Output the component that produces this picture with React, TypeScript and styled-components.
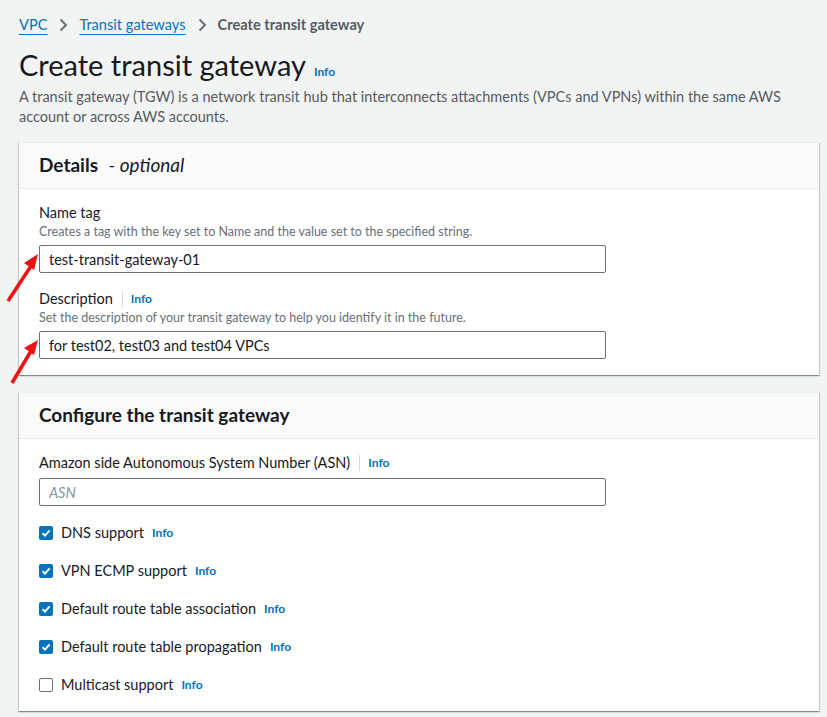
import React from "react"
import styled, { createGlobalStyle } from "styled-components"

const GlobalStyle = createGlobalStyle`
  body {
    margin: 0;
    background: #f2f3f3;
    font-family: Lato, "Open Sans", sans-serif;
    color: #16191f;
  }
`

const Page = styled.main`
  position: relative;
  padding: 15px 8px 30px 19px;
`

const Breadcrumbs = styled.nav`
  display: flex;
  align-items: center;
  gap: 8px;
  font-size: 14.6px;
  line-height: 20px;
`

const Crumb = styled.a`
  color: #0073bb;
  text-decoration: underline;
  text-underline-offset: 4px;
`

const CurrentCrumb = styled.span`
  color: #545b64;
  font-weight: 700;
`

const Chevron = styled.svg`
  width: 16px;
  height: 16px;
  color: #687078;
`

const TitleRow = styled.div`
  display: flex;
  align-items: baseline;
  gap: 8px;
  margin-top: 12px;
`

const Title = styled.h1`
  margin: 0;
  font-size: 29px;
  font-weight: 400;
  line-height: 36px;
`

const InfoLink = styled.a<{ $divider?: boolean }>`
  color: #0073bb;
  font-size: 12px;
  font-weight: 700;
  line-height: 16px;
  ${p => p.$divider && `
    margin-left: 1px;
    padding-left: 8px;
    border-left: 1px solid #d5dbdb;
  `}
`

const Lead = styled.p`
  margin: 4px 0 0;
  font-size: 14.5px;
  line-height: 20px;
  color: #545b64;
  max-width: 775px;
`

const Panel = styled.section<{ $gap?: number }>`
  width: 800px;
  margin-top: ${p => p.$gap ?? 15}px;
  background: #fff;
  border-top: 1px solid #eaeded;
  box-shadow: 0 1px 1px 0 rgba(0, 28, 36, 0.3), 1px 1px 1px 0 rgba(0, 28, 36, 0.15), -1px 1px 1px 0 rgba(0, 28, 36, 0.15);
`

const PanelHeader = styled.header`
  padding: 11px 20px 12px;
  background: #fafafa;
  border-bottom: 1px solid #eaeded;
`

const PanelTitle = styled.h2`
  margin: 0;
  font-size: 19px;
  font-weight: 700;
  line-height: 22px;
`

const Optional = styled.i`
  font-weight: 400;
  margin-left: 6px;
`

const PanelBody = styled.div`
  display: flex;
  flex-direction: column;
  gap: 16px;
  padding: 14px 20px 16px;
`

const Field = styled.div`
  display: flex;
  flex-direction: column;
`

const LabelRow = styled.div`
  display: flex;
  align-items: center;
  gap: 8px;
  font-size: 14.5px;
  line-height: 20px;
`

const Help = styled.div`
  font-size: 12.5px;
  line-height: 16px;
  color: #687078;
  margin-top: 1px;
`

const TextInput = styled.input`
  box-sizing: border-box;
  width: 567px;
  height: 28px;
  margin-top: 5px;
  padding: 0 9px;
  border: 1px solid #687078;
  border-radius: 2px;
  font-family: inherit;
  font-size: 14.5px;
  color: #16191f;
  background: #fff;
  &::placeholder {
    color: #879596;
    font-style: italic;
  }
`

const Checks = styled.div`
  display: flex;
  flex-direction: column;
  gap: 18px;
  margin-top: 1px;
`

const CheckRow = styled.label`
  display: flex;
  align-items: center;
  gap: 8px;
  font-size: 14.5px;
  line-height: 20px;
`

const Box = styled.span<{ $on: boolean }>`
  box-sizing: border-box;
  width: 14px;
  height: 14px;
  border-radius: 2px;
  display: flex;
  align-items: center;
  justify-content: center;
  background: ${p => (p.$on ? "#0073bb" : "#fff")};
  border: ${p => (p.$on ? "none" : "1.5px solid #687078")};
`

const Arrows = styled.svg`
  position: absolute;
  left: 0;
  top: 0;
  width: 60px;
  height: 400px;
  pointer-events: none;
`

const ChevronIcon = () => (
  <Chevron viewBox="0 0 16 16" fill="none">
    <path d="M5.5 2.5 11 8l-5.5 5.5" stroke="currentColor" strokeWidth="2" />
  </Chevron>
)

const Tick = () => (
  <svg width="10" height="10" viewBox="0 0 10 10" fill="none">
    <path d="M1.5 5.2 4 7.6 8.6 2.4" stroke="#fff" strokeWidth="2" />
  </svg>
)

const options = [
  { label: "DNS support", on: true },
  { label: "VPN ECMP support", on: true },
  { label: "Default route table association", on: true },
  { label: "Default route table propagation", on: true },
  { label: "Multicast support", on: false },
]

const App = () => {
  return (
    <>
      <GlobalStyle />
      <Page>
        <Breadcrumbs>
          <Crumb>VPC</Crumb>
          <ChevronIcon />
          <Crumb>Transit gateways</Crumb>
          <ChevronIcon />
          <CurrentCrumb>Create transit gateway</CurrentCrumb>
        </Breadcrumbs>

        <TitleRow>
          <Title>Create transit gateway</Title>
          <InfoLink>Info</InfoLink>
        </TitleRow>
        <Lead>
          A transit gateway (TGW) is a network transit hub that interconnects attachments (VPCs and VPNs) within the same AWS
          account or across AWS accounts.
        </Lead>

        <Panel>
          <PanelHeader>
            <PanelTitle>Details <Optional>- optional</Optional></PanelTitle>
          </PanelHeader>
          <PanelBody>
            <Field>
              <LabelRow>Name tag</LabelRow>
              <Help>Creates a tag with the key set to Name and the value set to the specified string.</Help>
              <TextInput defaultValue="test-transit-gateway-01" />
            </Field>
            <Field>
              <LabelRow>Description <InfoLink $divider>Info</InfoLink></LabelRow>
              <Help>Set the description of your transit gateway to help you identify it in the future.</Help>
              <TextInput defaultValue="for test02, test03 and test04 VPCs" />
            </Field>
          </PanelBody>
        </Panel>

        <Panel $gap={17}>
          <PanelHeader>
            <PanelTitle>Configure the transit gateway</PanelTitle>
          </PanelHeader>
          <PanelBody>
            <Field>
              <LabelRow>Amazon side Autonomous System Number (ASN) <InfoLink $divider>Info</InfoLink></LabelRow>
              <TextInput placeholder="ASN" />
            </Field>
            <Checks>
              {options.map(item => (
                <CheckRow key={item.label}>
                  <Box $on={item.on}>{item.on && <Tick />}</Box>
                  {item.label}
                  <InfoLink>Info</InfoLink>
                </CheckRow>
              ))}
            </Checks>
          </PanelBody>
        </Panel>

        {/* red annotation arrows */}
        <Arrows viewBox="0 0 60 400">
          <line x1="8" y1="301" x2="31" y2="266" stroke="#ee1111" strokeWidth="3.5" />
          <polygon points="38,254 24,263 34,270" fill="#ee1111" />
          <line x1="12" y1="383" x2="31" y2="351" stroke="#ee1111" strokeWidth="3.5" />
          <polygon points="38,340 24,348 34,355" fill="#ee1111" />
        </Arrows>
      </Page>
    </>
  )
}

export default App
